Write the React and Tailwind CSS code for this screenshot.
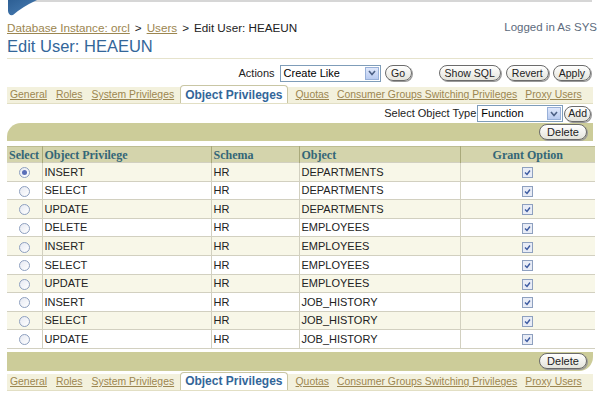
import React from "react";

const F = { fontFamily: '"Liberation Sans", Arial, sans-serif' };

function Btn({ children, className = "" }) {
  return (
    <span
      className={
        "inline-flex items-center justify-center h-[16px] rounded-full border border-[#6b6b6b] bg-gradient-to-b from-white to-[#e4e4dc] text-[10.5px] text-[#222] leading-none shadow-[1px_1px_0_#9a9a9a] whitespace-nowrap " +
        className
      }
    >
      {children}
    </span>
  );
}

function Select({ value, w }) {
  return (
    <span
      className="inline-flex items-center h-[17px] border border-[#7f9db9] bg-white text-[11px] text-black pl-[3px] whitespace-nowrap"
      style={{ width: w }}
    >
      <span className="flex-1">{value}</span>
      <span className="w-[14px] h-[13px] mr-[1px] border border-[#98b0d8] bg-gradient-to-b from-[#dfe8fb] to-[#b9cbf0] flex items-center justify-center">
        <svg width="8" height="6" viewBox="0 0 8 6">
          <path d="M1 1 L4 4.5 L7 1" stroke="#4d6185" strokeWidth="1.6" fill="none" />
        </svg>
      </span>
    </span>
  );
}

function Tabs() {
  const L = "text-[10.4px] text-[#9c8650] underline underline-offset-1 whitespace-nowrap";
  return (
    <div className="mx-[7px] h-[17px] bg-[#f3f1dd] flex items-end border-b border-[#e2dfc4] whitespace-nowrap">
      <div className="flex items-center h-[16px] pl-[3px] gap-[9px]">
        <span className={L}>General</span>
        <span className={L}>Roles</span>
        <span className={L}>System Privileges</span>
      </div>
      <div className="ml-[6px] h-[18px] bg-white border border-b-0 border-[#c9c6a4] rounded-t-[4px] px-[4px] flex items-center text-[12px] font-bold text-[#336699] whitespace-nowrap">
        Object Privileges
      </div>
      <div className="flex items-center h-[16px] pl-[8px] gap-[8px]">
        <span className={L}>Quotas</span>
        <span className={L}>Consumer Groups Switching Privileges</span>
        <span className={L}>Proxy Users</span>
      </div>
    </div>
  );
}

function Radio({ on }) {
  return (
    <span className="inline-flex w-[11px] h-[11px] rounded-full border border-[#8ea0bf] bg-gradient-to-br from-[#e6e9f2] to-white items-center justify-center">
      {on && <span className="w-[5px] h-[5px] rounded-full bg-[#5a6fb8]" />}
    </span>
  );
}

function Check() {
  return (
    <span className="inline-flex w-[11px] h-[11px] border border-[#8ea0bf] bg-[#e8ecf6] items-center justify-center">
      <svg width="7" height="7" viewBox="0 0 7 7">
        <path d="M1 3.5 L3 5.5 L6 1.5" stroke="#3c5aa0" strokeWidth="1.4" fill="none" />
      </svg>
    </span>
  );
}

const rows = [
  ["INSERT", "HR", "DEPARTMENTS"],
  ["SELECT", "HR", "DEPARTMENTS"],
  ["UPDATE", "HR", "DEPARTMENTS"],
  ["DELETE", "HR", "EMPLOYEES"],
  ["INSERT", "HR", "EMPLOYEES"],
  ["SELECT", "HR", "EMPLOYEES"],
  ["UPDATE", "HR", "EMPLOYEES"],
  ["INSERT", "HR", "JOB_HISTORY"],
  ["SELECT", "HR", "JOB_HISTORY"],
  ["UPDATE", "HR", "JOB_HISTORY"],
];

export default function App() {
  const H = { fontFamily: '"Liberation Serif", "Times New Roman", serif' };
  const th = "border-x border-[#a9a97a] font-bold text-[12px] text-[#336677] px-[2px] h-[16px] leading-none";
  const td = "border border-[#d2d0c0] h-[18.6px] px-[2px] text-[11px] text-[#222]";
  return (
    <div className="w-[600px] h-[400px] bg-white overflow-hidden" style={F}>
      {/* top brand */}
      <div className="relative h-[19px]">
        <div className="absolute left-[28px] right-[8px] top-0 h-[2px] bg-[#d6d6d6]" />
        <svg className="absolute left-[6px] top-0" width="32" height="17" viewBox="0 0 32 17">
          <defs>
            <linearGradient id="g" x1="0" y1="0" x2="1" y2="1">
              <stop offset="0" stopColor="#2d5f94" />
              <stop offset="1" stopColor="#4a7fb5" />
            </linearGradient>
          </defs>
          <path d="M2 0 L2 11 Q2.5 16 7 15 Q16 7 31 0 Z" fill="url(#g)" />
        </svg>
      </div>
      {/* breadcrumb */}
      <div className="h-[18px] flex items-center justify-between pl-[7px] pr-[3px] text-[11.7px] whitespace-nowrap">
        <div className="text-[#222]">
          <span className="text-[#9c8650] underline">Database Instance: orcl</span>
          <span className="mx-[5px]">&gt;</span>
          <span className="text-[#9c8650] underline">Users</span>
          <span className="mx-[5px]">&gt;</span>
          <span>Edit User: HEAEUN</span>
        </div>
        <div className="text-[#5d6b7d] text-[11.5px]">Logged in As SYS</div>
      </div>
      {/* title */}
      <div className="h-[19px] flex items-center px-[7px] text-[16.5px] text-[#336699] leading-none whitespace-nowrap">
        Edit User: HEAEUN
      </div>
      <div className="mx-[7px] mt-[2px] h-[1px] bg-[#e6e3cc]" />
      {/* actions */}
      <div className="h-[28px] flex items-center justify-end pr-[9px] text-[11px] text-[#222] whitespace-nowrap">
        <span className="mr-[5px]">Actions</span>
        <Select value="Create Like" w="101px" />
        <Btn className="ml-[4px] w-[27px]">Go</Btn>
        <Btn className="ml-[27px] px-[5px]">Show SQL</Btn>
        <Btn className="ml-[5px] px-[5px]">Revert</Btn>
        <Btn className="ml-[4px] px-[5px]">Apply</Btn>
      </div>
      <Tabs />
      {/* select object type */}
      <div className="h-[19px] flex items-center justify-end pr-[9px] text-[11px] text-[#222] whitespace-nowrap">
        <span className="mr-[1px]">Select Object Type</span>
        <Select value="Function" w="86px" />
        <Btn className="ml-[1px] px-[3px]">Add</Btn>
      </div>
      {/* olive bar */}
      <div className="mx-[7px] h-[18px] bg-[#cccc99] rounded-tl-[14px] flex items-center justify-end pr-[6px]">
        <Btn className="w-[48px] text-[11px]">Delete</Btn>
      </div>
      {/* table */}
      <div className="mx-[7px] mt-[5px]">
        <table className="w-[588px] border-collapse table-fixed">
          <colgroup>
            <col style={{ width: 35 }} />
            <col style={{ width: 169 }} />
            <col style={{ width: 88 }} />
            <col style={{ width: 161 }} />
            <col style={{ width: 135 }} />
          </colgroup>
          <thead>
            <tr className="bg-[#d4d4ac] border-t border-[#bdbd92]" style={H}>
              <th className={th + " text-left border-l-0 px-[1px]"}>Select</th>
              <th className={th + " text-left"}>Object Privilege</th>
              <th className={th + " text-left"}>Schema</th>
              <th className={th + " text-left"}>Object</th>
              <th className={th + " text-center border-r-0"}>Grant Option</th>
            </tr>
          </thead>
          <tbody>
            {rows.map((r, i) => (
              <tr key={i} className={i % 2 === 0 ? "bg-[#f8f7e8]" : "bg-white"}>
                <td className={td + " text-center border-l-0"}>
                  <span className="inline-flex align-middle">
                    <Radio on={i === 0} />
                  </span>
                </td>
                <td className={td}>{r[0]}</td>
                <td className={td}>{r[1]}</td>
                <td className={td}>{r[2]}</td>
                <td className={td + " text-center border-r-0"}>
                  <span className="inline-flex align-middle">
                    <Check />
                  </span>
                </td>
              </tr>
            ))}
          </tbody>
        </table>
      </div>
      {/* bottom olive bar */}
      <div className="mx-[7px] mt-[3px] h-[19px] bg-[#cccc99] rounded-br-[14px] flex items-center justify-end pr-[6px]">
        <Btn className="w-[48px] text-[11px]">Delete</Btn>
      </div>
      <div className="h-[3px]" />
      <Tabs />
    </div>
  );
}
